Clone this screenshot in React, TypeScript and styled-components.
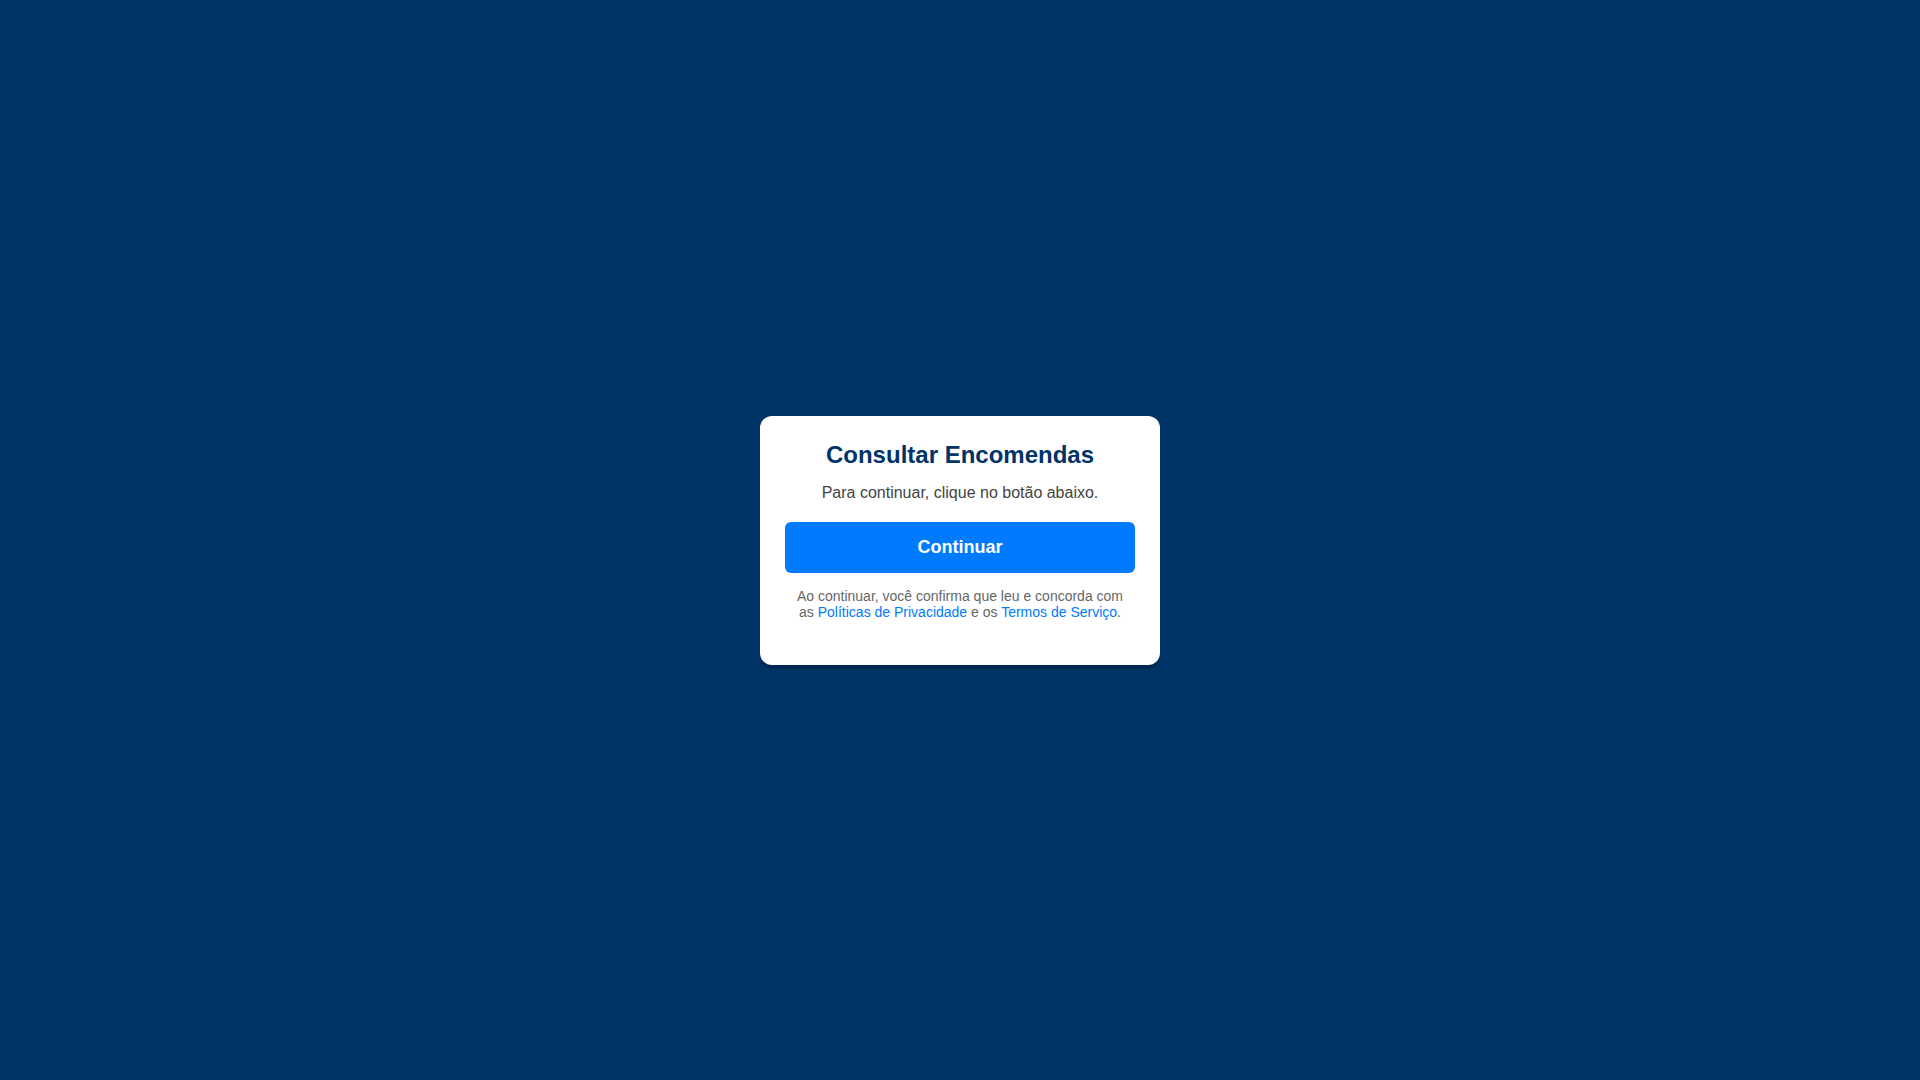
import React from 'react';
import styled, { createGlobalStyle } from 'styled-components';

const GlobalStyle = createGlobalStyle`
  body {
    margin: 0;
    background-color: #003366;
    font-family: 'Liberation Sans', Arial, sans-serif;
  }
`;

// #region -- Styled components
const Page = styled.main`
  display: flex;
  justify-content: center;
  align-items: center;
  min-height: 100vh;
`;
Page.displayName = 'Page';

const Card = styled.section`
  box-sizing: border-box;
  width: 100%;
  max-width: 400px;
  border-radius: 12px;
  padding: 25px;
  background-color: #ffffff;
  box-shadow: 0 4px 0 rgba(0, 0, 0, 0.2);
  text-align: center;
`;
Card.displayName = 'Card';

const Title = styled.h1`
  margin: 0 0 15px;
  font-size: 24px;
  line-height: 28px;
  color: #003366;
`;
Title.displayName = 'Title';

const Message = styled.p`
  margin: 0 0 20px;
  font-size: 16px;
  line-height: 18px;
  color: #444444;
`;
Message.displayName = 'Message';

const ContinueButton = styled.button`
  display: block;
  width: 100%;
  border: none;
  border-radius: 6px;
  padding: 15px;
  background-color: #007bff;
  font-family: inherit;
  font-size: 18px;
  font-weight: bold;
  line-height: 21px;
  color: #ffffff;
  cursor: pointer;
  &:hover {
    background-color: #0056b3;
  }
`;
ContinueButton.displayName = 'ContinueButton';

const Terms = styled.p`
  margin: 15px 0 20px;
  padding: 0 5px;
  font-size: 14px;
  line-height: 16px;
  color: #666666;
`;
Terms.displayName = 'Terms';

const TermsLink = styled.a`
  text-decoration: none;
  color: #007bff;
  &:hover {
    text-decoration: underline;
  }
`;
TermsLink.displayName = 'TermsLink';
// #endregion

function App() {
  return (
    <Page>
      <GlobalStyle />
      <Card>
        <Title>Consultar Encomendas</Title>
        <Message>Para continuar, clique no botão abaixo.</Message>
        <ContinueButton type="button">Continuar</ContinueButton>
        <Terms>
          Ao continuar, você confirma que leu e concorda com as{' '}
          <TermsLink href="/privacidade">Políticas de Privacidade</TermsLink> e os{' '}
          <TermsLink href="/termos">Termos de Serviço</TermsLink>.
        </Terms>
      </Card>
    </Page>
  );
}

export default App;
